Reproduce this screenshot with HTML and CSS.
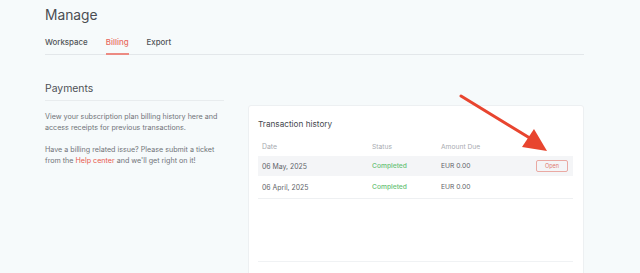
FILE: index.html
```html
<!DOCTYPE html>
<html>
<head>
<meta charset="utf-8">
<link rel="stylesheet" href="styles.css">
</head>
<body>
<div class="page">
  <h1 class="title">Manage</h1>
  <nav class="tabs">
    <span class="tab">Workspace</span>
    <span class="tab active">Billing</span>
    <span class="tab">Export</span>
  </nav>
  <div class="main">
    <section class="side">
      <h2 class="side-title">Payments</h2>
      <p class="side-text">View your subscription plan billing history here and access receipts for previous transactions.</p>
      <p class="side-text">Have a billing related issue? Please submit a ticket from the <span class="link">Help center</span> and we'll get right on it!</p>
    </section>
    <section class="card">
      <h3 class="card-title">Transaction history</h3>
      <div class="table">
        <div class="row head">
          <span class="c-date">Date</span>
          <span class="c-status">Status</span>
          <span class="c-amt">Amount Due</span>
          <span class="c-act"></span>
        </div>
        <div class="row shaded">
          <span class="c-date">06 May, 2025</span>
          <span class="c-status ok">Completed</span>
          <span class="c-amt">EUR 0.00</span>
          <span class="c-act"><span class="btn">Open</span></span>
        </div>
        <div class="row line">
          <span class="c-date">06 April, 2025</span>
          <span class="c-status ok">Completed</span>
          <span class="c-amt">EUR 0.00</span>
          <span class="c-act"></span>
        </div>
        <div class="empty"></div>
      </div>
    </section>
  </div>
  <svg class="arrow" width="100" height="70" viewBox="0 0 100 70">
    <line x1="2" y1="2" x2="74" y2="46" stroke="#e8452f" stroke-width="3" stroke-linecap="round"/>
    <polygon points="88,57 63,53 75,35" fill="#e8452f"/>
  </svg>
</div>
</body>
</html>
```
FILE: styles.css
```css
* { box-sizing: border-box; }
html, body { margin: 0; padding: 0; }
body {
  background: #f6fafb;
  font-family: Inter, "Noto Sans", sans-serif;
  color: #4a4d52;
  overflow: hidden;
  height: 273px;
}
.page {
  position: relative;
  padding: 0 56px 0 45px;
}
.title {
  margin: 0;
  padding-top: 6px;
  font-size: 13.8px;
  line-height: 19px;
  font-weight: 400;
  color: #4a4d52;
}
.tabs {
  display: flex;
  gap: 18px;
  margin-top: 10px;
  border-bottom: 1px solid #e3e7ea;
  height: 20px;
}
.tab {
  font-size: 7.9px;
  font-weight: 500;
  color: #505357;
  line-height: 13px;
  padding-top: 1px;
}
.tab.active {
  color: #e86a60;
  border-bottom: 2px solid #ec8a82;
  margin-bottom: -1px;
}
.main {
  display: flex;
  gap: 24px;
  margin-top: 25px;
}
.side {
  width: 179px;
  flex: none;
}
.side-title {
  margin: 0;
  font-size: 10.4px;
  font-weight: 400;
  line-height: 18px;
  color: #4e5156;
  padding-bottom: 2px;
  border-bottom: 1px solid #e8ecee;
}
.side-text {
  margin: 10px 0 0;
  font-size: 7.15px;
  line-height: 11px;
  color: #707378;
}
.side-text + .side-text { margin-top: 11px; }
.link { color: #e8594d; }
.card {
  flex: 1;
  background: #fff;
  border: 1px solid #edf0f2;
  border-radius: 3px;
  margin-top: 25px;
  height: 200px;
  padding: 12px 10px 0 9px;
}
.card-title {
  margin: 0;
  font-size: 8.2px;
  font-weight: 400;
  line-height: 12px;
  color: #46494e;
}
.table { margin-top: 7px; }
.row {
  display: flex;
  align-items: center;
  height: 20px;
  font-size: 6.7px;
  color: #606368;
  padding-left: 4px;
}
.row.head { color: #a8abb0; height: 19px; }
.row.shaded { background: #f4f5f7; }
.row.line { height: 23px; border-bottom: 1px solid #eef0f2; }
.c-date { width: 110px; font-size: 6.9px; }
.c-status { width: 69px; }
.c-amt { width: 94px; }
.c-act { flex: 1; display: flex; justify-content: flex-end; padding-right: 5px; }
.ok { color: #68c276; font-weight: 500; }
.btn {
  border: 1px solid #eaa9a3;
  border-radius: 2px;
  color: #e07a72;
  font-size: 5.5px;
  width: 32px;
  height: 12px;
  display: flex;
  align-items: center;
  justify-content: center;
}
.empty {
  height: 63px;
  border-bottom: 1px solid #f0f2f4;
}
.arrow {
  position: absolute;
  left: 459px;
  top: 94px;
}
```
